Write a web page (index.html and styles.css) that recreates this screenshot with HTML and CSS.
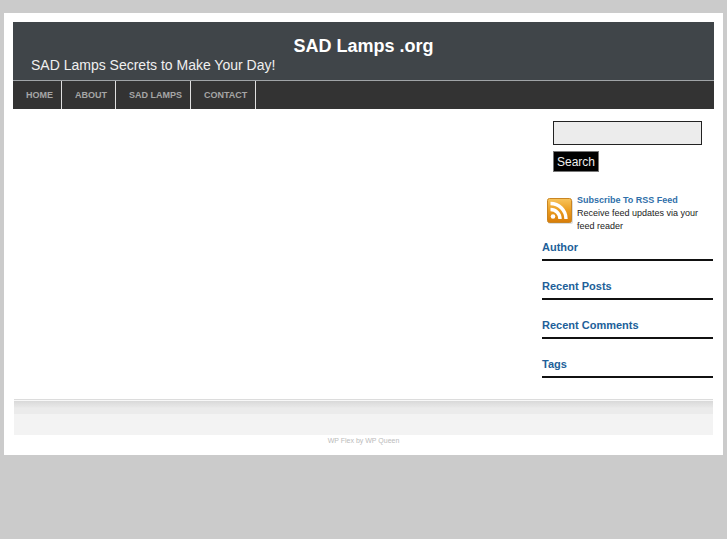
FILE: index.html
```
<!DOCTYPE html>
<html lang="en">
<head>
    <meta charset="UTF-8">
    <title>SAD Lamps .org</title>
    <link rel="stylesheet" href="styles.css">
</head>
<body>
    <div class="wrapper">
        <div class="header">
            <h1>SAD Lamps .org</h1>
            <p>SAD Lamps Secrets to Make Your Day!</p>
        </div>
        <ul class="menu">
            <li><a href="#">HOME</a></li>
            <li><a href="#">ABOUT</a></li>
            <li><a href="#">SAD LAMPS</a></li>
            <li><a href="#">CONTACT</a></li>
        </ul>
        <div class="main">
            <div class="content"></div>
            <div class="sidebar">
                <form class="search" action="#">
                    <input type="text" name="s" aria-label="Search">
                    <button type="submit">Search</button>
                </form>
                <div class="rss">
                    <svg width="28" height="28" viewBox="0 0 28 28">
                        <defs>
                            <linearGradient id="rss-bg" x1="0" y1="0" x2="0" y2="1">
                                <stop offset="0" stop-color="#f8c45c"/>
                                <stop offset="0.5" stop-color="#eb9d20"/>
                                <stop offset="1" stop-color="#d87c08"/>
                            </linearGradient>
                        </defs>
                        <rect x="2" y="3" width="25" height="24" rx="2" fill="#ddd"/>
                        <rect x="1.5" y="1.5" width="24" height="24" rx="2" fill="url(#rss-bg)" stroke="#c98522"/>
                        <circle cx="7" cy="19.500" r="2.300" fill="#fff"/>
                        <path d="M4.500 12.500a9.500 9.500 0 0 1 9.500 9.500M4.500 6.500a15.500 15.500 0 0 1 15.500 15.500" fill="none" stroke="#fff" stroke-width="3.400"/>
                    </svg>
                    <div class="rss-txt">
                        <a href="#">Subscribe To RSS Feed</a>
                        <p>Receive feed updates via your feed reader</p>
                    </div>
                </div>
                <h2>Author</h2>
                <h2>Recent Posts</h2>
                <h2>Recent Comments</h2>
                <h2>Tags</h2>
            </div>
        </div>
        <div class="bottom"></div>
        <p class="footer"><a href="#">WP Flex</a> by <a href="#">WP Queen</a></p>
    </div>
</body>
</html>
```
FILE: styles.css
```
* { box-sizing: border-box;}
body,p,ul,h1,h2 { margin: 0; padding: 0;}
li { list-style: none;}
a { text-decoration: none;}
html { background: #fff;}
body {
    display: flow-root;
    min-height: calc(100vh - 6px);
    padding: 13px 4px 0;
    background: #cbcbcb;
    font-family: "Liberation Sans", Arial, sans-serif;
    font-size: 10px;
    color: #222;
}
.wrapper {
    padding: 9px 9px 8px;
    background: #fff;
}
.header {
    padding: 13px 18px 7px;
    background: #404549;
    border-bottom: 1px solid #a0a4a7;
    color: #fff;
}
.header h1 {
    font-size: 18px;
    line-height: 22px;
    text-align: center;
}
.header p {
    font-size: 14px;
    line-height: 16px;
    color: #f0f0f0;
}
.menu {
    display: flex;
    background: #333;
}
.menu a {
    display: block;
    padding: 0 8px 0 13px;
    border-right: 1px solid #e0e0e0;
    font-size: 9px;
    font-weight: bold;
    line-height: 28px;
    color: #a6a6a6;
}
.main {
    display: flex;
    padding: 12px 1px 4px;
}
.content {
    flex: 1;
}
.sidebar {
    width: 171px;
}
.search {
    display: flex;
    flex-direction: column;
    align-items: flex-start;
    gap: 6px;
    padding: 0 11px;
}
.search input {
    width: 100%;
    height: 24px;
    padding: 0 4px;
    border: 1px solid #222;
    border-radius: 0;
    background: #ececec;
}
.search button {
    height: 21px;
    padding: 0 3px;
    border: 1px solid #777;
    background: #000;
    font-family: inherit;
    font-size: 12px;
    color: #eee;
}
.rss {
    display: flex;
    gap: 3px;
    padding: 22px 0 6px 4px;
}
.rss svg {
    flex: none;
    margin-top: 3px;
}
.rss-txt {
    font-size: 9px;
    line-height: 13px;
}
.rss a {
    font-weight: bold;
    color: #2f70aa;
}
.sidebar h2 {
    margin-bottom: 17px;
    padding-bottom: 4px;
    border-bottom: 2px solid #111;
    font-size: 11px;
    line-height: 16px;
    color: #215f99;
}
.bottom {
    height: 36px;
    margin: 0 1px;
    border-top: 1px solid #dcdcdc;
    background: linear-gradient(#f8f8f8 1px, #d9d9d9 1px, #e7e7e7 7px, #ebebeb 8px, #ebebeb 14px, #f3f3f3 14px);
}
.footer {
    font-size: 7px;
    line-height: 12px;
    text-align: center;
    color: #bbb;
}
.footer a {
    color: #bbb;
}
```
